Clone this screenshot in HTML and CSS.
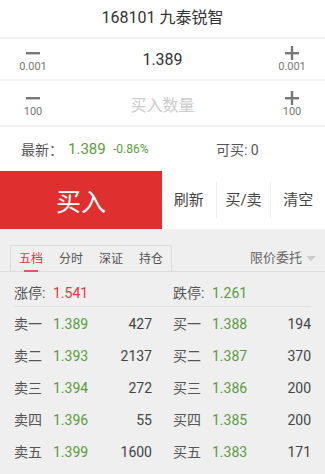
FILE: index.html
```html
<!DOCTYPE html>
<html lang="zh-Hans">
<head>
  <meta charset="UTF-8">
  <meta name="viewport" content="width=device-width, initial-scale=1.0">
  <title>买入</title>
  <link rel="stylesheet" href="styles.css">
</head>
<body>
  <div class="title">168101 九泰锐智</div>

  <div class="stepper price-row">
    <div class="step">
      <svg class="step-icon" viewBox="0 0 14 14"><rect x="0" y="6" width="14" height="2.4" fill="#777"/></svg>
      <span class="step-val">0.001</span>
    </div>
    <div class="step-main">1.389</div>
    <div class="step">
      <svg class="step-icon" viewBox="0 0 14 14"><rect x="0" y="6" width="14" height="2.4" fill="#777"/><rect x="5.8" y="0" width="2.4" height="14" fill="#777"/></svg>
      <span class="step-val">0.001</span>
    </div>
  </div>

  <div class="stepper qty-row">
    <div class="step">
      <svg class="step-icon" viewBox="0 0 14 14"><rect x="0" y="6" width="14" height="2.4" fill="#777"/></svg>
      <span class="step-val">100</span>
    </div>
    <div class="step-main placeholder">买入数量</div>
    <div class="step">
      <svg class="step-icon" viewBox="0 0 14 14"><rect x="0" y="6" width="14" height="2.4" fill="#777"/><rect x="5.8" y="0" width="2.4" height="14" fill="#777"/></svg>
      <span class="step-val">100</span>
    </div>
  </div>

  <div class="info-row">
    <span class="info-label">最新：</span>
    <span class="last-price">1.389</span>
    <span class="change">-0.86%</span>
    <span class="can-buy">可买: 0</span>
  </div>

  <div class="action-row">
    <div class="buy-btn">买入</div>
    <div class="tool-btn">刷新</div>
    <div class="tool-btn">买/卖</div>
    <div class="tool-btn">清空</div>
  </div>

  <div class="panel">
    <div class="tab-bar">
      <div class="tabs">
        <div class="tab active">五档</div>
        <div class="tab">分时</div>
        <div class="tab">深证</div>
        <div class="tab">持仓</div>
      </div>
      <div class="order-type">限价委托 <span class="caret"></span></div>
    </div>

    <div class="limits">
      <div class="limit"><span class="book-label">涨停:</span><span class="up">1.541</span></div>
      <div class="limit"><span class="book-label">跌停:</span><span class="green">1.261</span></div>
    </div>

    <div class="book" id="book"></div>
  </div>

  <script>
    const asks = [['卖一', '1.389', 427], ['卖二', '1.393', 2137], ['卖三', '1.394', 272], ['卖四', '1.396', 55], ['卖五', '1.399', 1600]];
    const bids = [['买一', '1.388', 194], ['买二', '1.387', 370], ['买三', '1.386', 200], ['买四', '1.385', 200], ['买五', '1.383', 171]];
    const book = document.getElementById('book');

    function cell(item) {
      return `<div class="half"><span class="book-label">${item[0]}</span><span class="green">${item[1]}</span><span class="vol">${item[2]}</span></div>`;
    }

    asks.forEach((ask, i) => {
      const row = document.createElement('div');
      row.className = 'book-row';
      row.innerHTML = cell(ask) + cell(bids[i]);
      book.appendChild(row);
    });
  </script>
</body>
</html>
```

FILE: styles.css
```css
body {
  margin: 0;
  font-family: Roboto, "Noto Sans CJK SC", sans-serif;
  background: #efefef;
  color: #444;
}
.title {
  height: 37px;
  line-height: 35px;
  text-align: center;
  font-size: 16px;
  color: #333;
  background: #fff;
  border-bottom: 2px solid #f3f3f3;
}
.stepper {
  display: flex;
  align-items: center;
  justify-content: space-between;
  padding: 0 11px;
  background: #fff;
  border-bottom: 2px solid #f3f3f3;
}
.price-row {
  height: 40px;
}
.qty-row {
  height: 44px;
}
.step {
  width: 44px;
  display: flex;
  flex-direction: column;
  align-items: center;
}
.step-icon {
  width: 14px;
  height: 14px;
}
.step-val {
  font-size: 11px;
  line-height: 14px;
  color: #777;
}
.price-row .step {
  margin-top: 1px;
}
.qty-row .step {
  margin-top: 3px;
}
.step-main {
  font-size: 16px;
  color: #333;
}
.placeholder {
  color: #cbcbcb;
  margin-top: 2px;
}
.info-row {
  height: 44px;
  display: flex;
  align-items: center;
  padding-left: 21px;
  background: #fff;
}
.info-label {
  font-size: 14px;
  color: #555;
  width: 47px;
}
.last-price {
  font-size: 15px;
  color: #5a9c3c;
  width: 45px;
}
.change {
  font-size: 12px;
  color: #5a9c3c;
  width: 103px;
}
.can-buy {
  font-size: 14px;
  color: #555;
}
.action-row {
  height: 58px;
  display: flex;
  align-items: center;
  background: #fff;
}
.buy-btn {
  width: 162px;
  height: 100%;
  display: flex;
  align-items: center;
  justify-content: center;
  background: #df2f2f;
  color: #fff;
  font-size: 25px;
}
.tool-btn {
  flex: 1;
  height: 36px;
  line-height: 36px;
  text-align: center;
  font-size: 15px;
  color: #444;
}
.tool-btn + .tool-btn {
  border-left: 1px solid #eee;
}
.panel {
  padding-top: 16px;
}
.tab-bar {
  display: flex;
  align-items: flex-end;
  justify-content: space-between;
  border-bottom: 1px solid #dcdcdc;
  padding: 0 9px 0 10px;
}
.tabs {
  display: flex;
  border: 1px solid #dcdcdc;
  border-bottom: none;
  border-radius: 2px 2px 0 0;
}
.tab {
  width: 40px;
  height: 25px;
  line-height: 26px;
  text-align: center;
  font-size: 12px;
  color: #555;
  position: relative;
}
.tab.active {
  color: #e0393d;
}
.tab.active::after {
  content: "";
  position: absolute;
  left: 13px;
  right: 13px;
  bottom: -1px;
  height: 2px;
  background: #e8555a;
}
.order-type {
  height: 26px;
  line-height: 26px;
  font-size: 13px;
  color: #666;
  display: flex;
  align-items: center;
  gap: 4px;
}
.caret {
  width: 0;
  height: 0;
  border-left: 5px solid transparent;
  border-right: 5px solid transparent;
  border-top: 5px solid #ccc;
}
.limits {
  display: flex;
  gap: 21px;
  margin: 0 14px;
  padding-top: 8px;
  height: 26px;
  line-height: 26px;
  border-bottom: 1px solid #e2e2e2;
}
.limit {
  flex: 1;
  display: flex;
  font-size: 14px;
}
.book {
  padding: 0 14px;
  margin-top: 1px;
}
.book-row {
  display: flex;
  gap: 21px;
  height: 32px;
  line-height: 32px;
  font-size: 14px;
}
.half {
  flex: 1;
  display: flex;
}
.book-label {
  width: 39px;
  color: #555;
}
.up {
  color: #e8363c;
}
.green {
  color: #5a9c3c;
}
.vol {
  flex: 1;
  text-align: right;
  color: #444;
}
```
